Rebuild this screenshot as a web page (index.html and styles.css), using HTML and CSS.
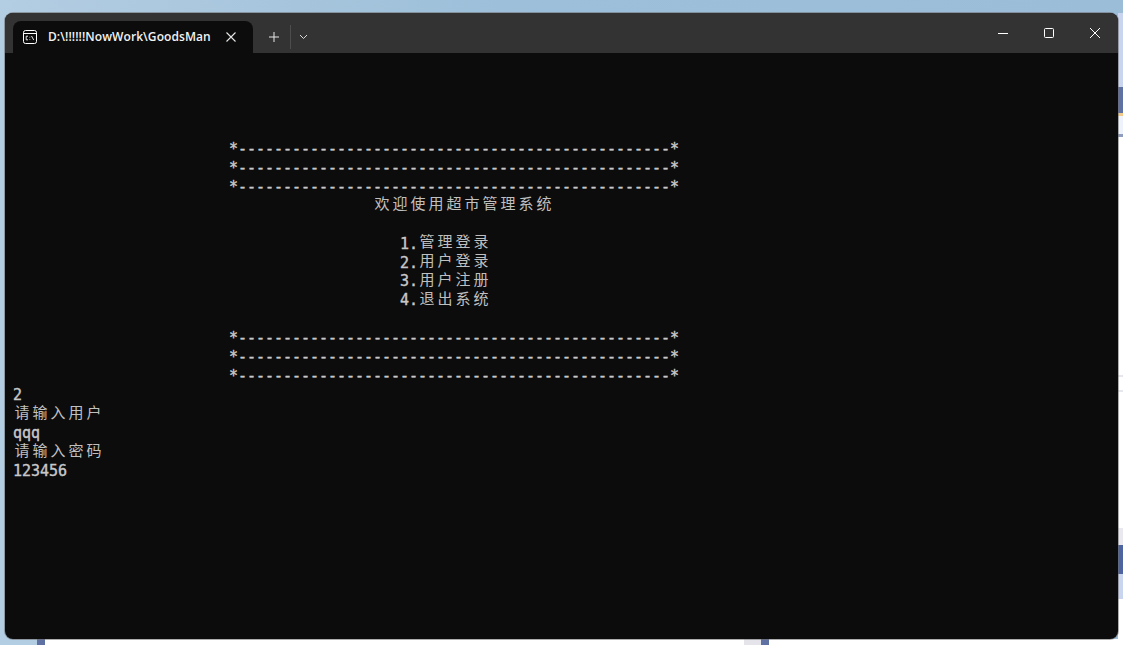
FILE: index.html
```html
<!DOCTYPE html>
<html lang="zh">
<head>
<meta charset="utf-8">
<title>Terminal</title>
<link rel="stylesheet" href="styles.css">
</head>
<body>
<div class="desktop">
  <div class="edge-right">
    <div class="er er-sky"></div>
    <div class="er er-lav"></div>
    <div class="er er-band"></div>
    <div class="er er-orange"></div>
    <div class="er er-pale"></div>
    <div class="er er-line"></div>
    <div class="er er-white"></div>
    <div class="er er-rule"></div>
    <div class="er er-gap"></div>
    <div class="er er-rule"></div>
    <div class="er er-white2"></div>
    <div class="er er-gray"></div>
    <div class="er er-band2"></div>
    <div class="er er-soft"></div>
    <div class="er er-rest"></div>
  </div>
  <div class="edge-bottom">
    <div class="eb eb-sky"></div>
    <div class="eb eb-blue"></div>
    <div class="eb eb-white"></div>
    <div class="eb eb-gray"></div>
    <div class="eb eb-blue"></div>
    <div class="eb eb-fill"></div>
  </div>

  <main class="window">
    <header class="titlebar">
      <div class="tab">
        <svg class="tab-icon" width="14" height="14" viewBox="0 0 14 14" fill="none" stroke="#fff" stroke-width="1">
          <rect x=".5" y=".5" width="13" height="13" rx="2"/>
          <path d="M.5 3.5h13"/>
          <path d="M5 6.2H3.2v3.6H5M6.8 6.8v.7M6.8 9v.7M8.5 6l2.2 4" stroke-width=".9"/>
        </svg>
        <span class="tab-title">D:\!!!!!!NowWork\GoodsMan</span>
        <svg class="tab-close" width="10" height="10" viewBox="0 0 10 10" fill="none" stroke="#e6e6e6" stroke-width="1.1">
          <path d="M.5.5l9 9M9.5.5l-9 9"/>
        </svg>
      </div>
      <div class="tab-actions">
        <svg class="new-tab" width="12" height="12" viewBox="0 0 12 12" fill="none" stroke="#e8e8e8" stroke-width="1">
          <path d="M6 1v10M1 6h10"/>
        </svg>
        <span class="divider"></span>
        <svg class="chevron" width="9" height="6" viewBox="0 0 9 6" fill="none" stroke="#d8d8d8" stroke-width="1">
          <path d="M1 1l3.5 3.5L8 1"/>
        </svg>
      </div>
      <div class="caption">
        <button class="cap-btn" aria-label="Minimize"><svg width="10" height="10" viewBox="0 0 10 10" fill="none" stroke="#fff" stroke-width="1"><path d="M0 5.5h10"/></svg></button>
        <button class="cap-btn" aria-label="Maximize"><svg width="10" height="10" viewBox="0 0 10 10" fill="none" stroke="#fff" stroke-width="1"><rect x=".5" y=".5" width="9" height="9" rx="1"/></svg></button>
        <button class="cap-btn" aria-label="Close"><svg width="10" height="10" viewBox="0 0 10 10" fill="none" stroke="#fff" stroke-width="1"><path d="M0 0l10 10M10 0L0 10"/></svg></button>
      </div>
    </header>
<pre class="console">




                        *------------------------------------------------*
                        *------------------------------------------------*
                        *------------------------------------------------*
                                        <span class="cjk">欢迎使用超市管理系统</span>

                                           1.<span class="cjk">管理登录</span>
                                           2.<span class="cjk">用户登录</span>
                                           3.<span class="cjk">用户注册</span>
                                           4.<span class="cjk">退出系统</span>

                        *------------------------------------------------*
                        *------------------------------------------------*
                        *------------------------------------------------*
2
<span class="cjk">请输入用户</span>
qqq
<span class="cjk">请输入密码</span>
123456</pre>
  </main>
</div>
</body>
</html>
```
FILE: styles.css
```css
html, body {
  margin: 0;
  height: 100%;
  overflow: hidden;
}

.desktop {
  position: relative;
  width: 1123px;
  height: 645px;
  background: linear-gradient(90deg, #b3cde2 0%, #9dbfd9 45%, #9cbdd8 100%);
  overflow: hidden;
}

.edge-right {
  position: absolute;
  top: 0;
  right: 0;
  width: 5px;
  height: 645px;
  display: flex;
  flex-direction: column;
}

.er-sky { height: 13px; background: #9cbdd8; }
.er-lav { height: 74px; background: #c9d4ef; }
.er-band { height: 26px; background: #5f70a3; }
.er-orange { height: 3px; background: #f2c98a; }
.er-pale { height: 18px; background: #eef2fb; }
.er-line { height: 3px; background: #8f9dc0; }
.er-white { height: 238px; background: #fff; }
.er-rule { height: 2px; background: #e6e6ee; }
.er-gap { height: 13px; background: #fff; }
.er-white2 { height: 136px; background: #fff; }
.er-gray { height: 17px; background: #e8e8ee; }
.er-band2 { height: 29px; background: #4e64a0; }
.er-soft { height: 25px; background: #c9d4ef; }
.er-rest { flex: 1; background: #fff; }

.edge-bottom {
  position: absolute;
  left: 0;
  bottom: 0;
  width: 1123px;
  height: 6px;
  display: flex;
}

.eb-sky { width: 37px; background: #b3cde2; }
.eb-blue { width: 8px; background: #5f70a3; }
.eb-white { width: 699px; background: #fff; }
.eb-gray { width: 17px; background: #e4e4ea; }
.eb-fill { flex: 1; background: #fff; }

.window {
  position: absolute;
  left: 5px;
  top: 13px;
  width: 1113px;
  height: 626px;
  display: flex;
  flex-direction: column;
  background: #0c0c0c;
  border-radius: 8px;
  box-shadow: 0 0 0 1px rgba(110, 110, 110, 0.55);
  overflow: hidden;
}

.titlebar {
  flex: none;
  height: 40px;
  display: flex;
  align-items: flex-end;
  background: #333333;
  padding-left: 8px;
}

.tab {
  width: 240px;
  height: 32px;
  box-sizing: border-box;
  display: flex;
  align-items: center;
  padding: 0 17px 0 10px;
  background: #0c0c0c;
  border-radius: 8px 8px 0 0;
  color: #f2f2f2;
}

.tab-icon { flex: none; }

.tab-title {
  margin-left: 11px;
  flex: 1;
  font: 600 12px/16px "Open Sans", "Noto Sans", sans-serif;
  letter-spacing: 0.08px;
  white-space: nowrap;
  overflow: hidden;
}

.tab-close { flex: none; }

.tab-actions {
  height: 32px;
  display: flex;
  align-items: center;
  padding-left: 15px;
}

.divider {
  width: 1px;
  height: 24px;
  margin: 0 8px 0 10px;
  background: #4d4d4d;
}

.caption {
  margin-left: auto;
  height: 40px;
  display: flex;
}

.cap-btn {
  width: 46px;
  height: 40px;
  padding: 0;
  margin: 0;
  border: 0;
  background: transparent;
  display: flex;
  align-items: center;
  justify-content: center;
}

.console {
  flex: 1;
  margin: 0;
  padding: 11px 8px 0;
  color: #c8c8c8;
  font-family: "DejaVu Sans Mono", "Noto Sans CJK SC", monospace;
  font-size: 15px;
  line-height: 18.95px;
  letter-spacing: -0.03px;
  -webkit-text-stroke: 0.4px #c8c8c8;
  overflow: hidden;
}

.cjk {
  font-family: "Noto Sans CJK SC", sans-serif;
  font-size: 15px;
  line-height: 0;
  letter-spacing: 3px;
  margin-left: 1.5px;
  margin-right: -1.5px;
  vertical-align: 1.5px;
  -webkit-text-stroke: 0;
  color: #c0c0c0;
}
```
